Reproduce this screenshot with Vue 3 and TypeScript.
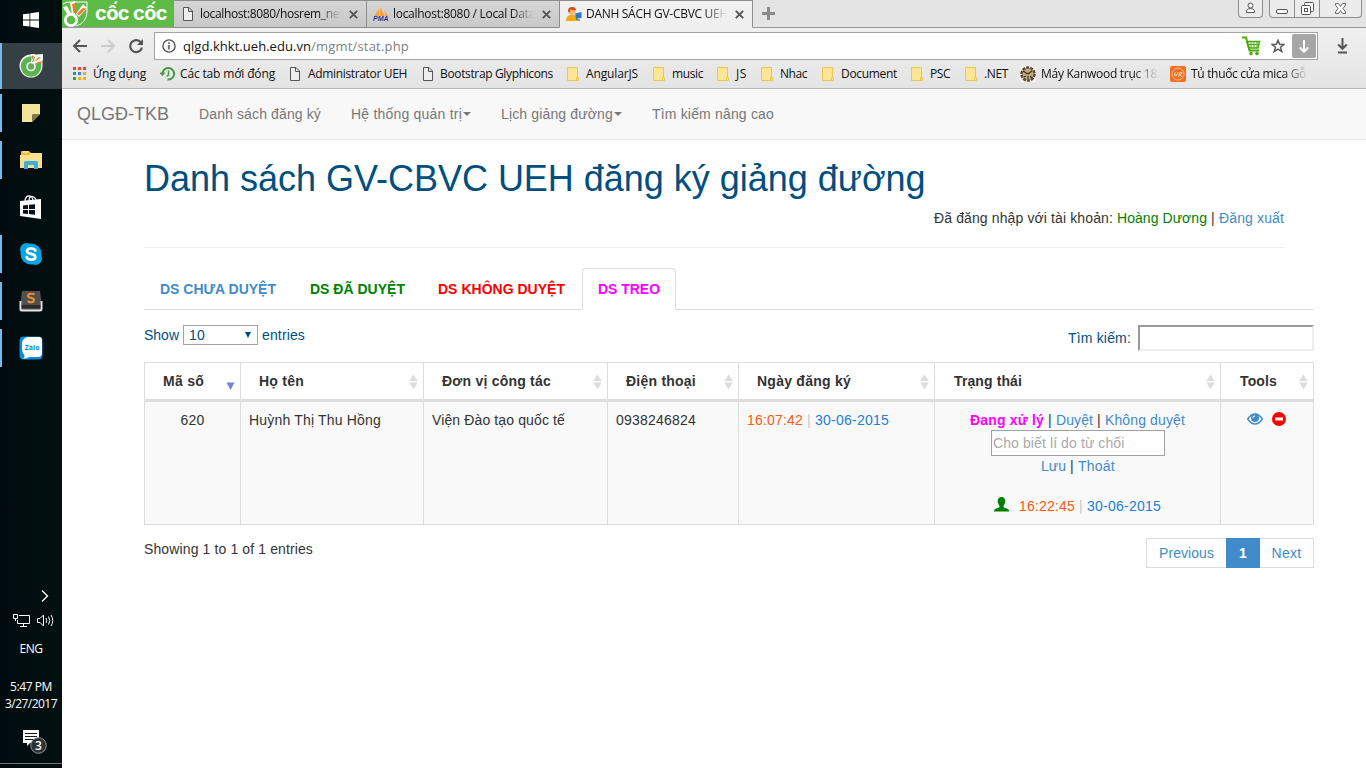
<script setup lang="ts">
import { ref } from 'vue'

interface Bookmark { label: string; icon: string; slot: number; textWidth: number; gap: number; fade?: boolean }
interface BrowserTab { title: string; icon: string; textWidth: number; active?: boolean }
interface Column { label: string; textWidth: number; sorted?: boolean }

// Spreads letters so that a label takes exactly the given width.
const vFit = {
  mounted(el: HTMLElement, binding: { value: number }) {
    const natural = el.getBoundingClientRect().width
    const count = (el.textContent || '').length
    if (count) el.style.letterSpacing = `${(binding.value - natural) / count}px`
  },
}

const search = ref('')
const reason = ref('')

const dock = ['win', 'coccoc', 'note', 'folder', 'store', 'skype', 'sublime', 'zalo']
const running = ['coccoc', 'note', 'folder', 'skype', 'sublime', 'zalo']

const browserTabs: BrowserTab[] = [
  { title: 'localhost:8080/hosrem_new', icon: 'page', textWidth: 148 },
  { title: 'localhost:8080 / Local Datab', icon: 'pma', textWidth: 149 },
  { title: 'DANH SÁCH GV-CBVC UEH', icon: 'user', textWidth: 142, active: true },
]

const bookmarks: Bookmark[] = [
  { label: 'Ứng dụng', icon: 'apps', slot: 88, textWidth: 53, gap: 5 },
  { label: 'Các tab mới đóng', icon: 'history', slot: 127, textWidth: 95, gap: 4 },
  { label: 'Administrator UEH', icon: 'page', slot: 133, textWidth: 99, gap: 5 },
  { label: 'Bootstrap Glyphicons', icon: 'page', slot: 146, textWidth: 113, gap: 4 },
  { label: 'AngularJS', icon: 'dir', slot: 86, textWidth: 52, gap: 4 },
  { label: 'music', icon: 'dir', slot: 64, textWidth: 31, gap: 4 },
  { label: 'JS', icon: 'dir', slot: 44, textWidth: 11, gap: 4 },
  { label: 'Nhac', icon: 'dir', slot: 61, textWidth: 27, gap: 4 },
  { label: 'Document', icon: 'dir', slot: 89, textWidth: 56, gap: 4 },
  { label: 'PSC', icon: 'dir', slot: 54, textWidth: 20, gap: 4 },
  { label: '.NET', icon: 'dir', slot: 56, textWidth: 24, gap: 4 },
  { label: 'Máy Kanwood trục 18', icon: 'clock', slot: 150, textWidth: 116, gap: 5, fade: true },
  { label: 'Tủ thuốc cửa mica Gỗ', icon: 'ur', slot: 150, textWidth: 115, gap: 5, fade: true },
]

const columns: Column[] = [
  { label: 'Mã số', textWidth: 41, sorted: true },
  { label: 'Họ tên', textWidth: 45 },
  { label: 'Đơn vị công tác', textWidth: 109 },
  { label: 'Điện thoại', textWidth: 70 },
  { label: 'Ngày đăng ký', textWidth: 94 },
  { label: 'Trạng thái', textWidth: 68 },
  { label: 'Tools', textWidth: 37 },
]
</script>

<template>
  <div class="screen">
    <aside class="dock">
      <div v-for="d in dock" :key="d" class="slot" :class="[d, { running: running.includes(d) }]">
        <svg v-if="d === 'win'" width="16" height="16" viewBox="0 0 16 16" fill="#fff"><path d="M0 2.3 6.5 1.4V7.5H0zM7.3 1.2 16 0V7.5H7.3zM0 8.4H6.5V14.6L0 13.7zM7.3 8.4H16V16L7.3 14.8z" /></svg>
        <svg v-else-if="d === 'coccoc'" width="24" height="24" viewBox="0 0 24 24">
          <path d="M12 .5A11.5 11.5 0 1 0 23.5 12L23.5 .5z" fill="#f4f8f2" />
          <circle cx="12" cy="12.5" r="10.2" fill="#5bb350" />
          <path d="M12 11V0H16zM13 11 17 1 24 0V6z" fill="#f5f7f2" />
          <path d="M12.500 7V2L15 1.500zM15 8.500 19 3.500 22 3zM16.500 10 22.500 7V9.500z" fill="#f26a21" />
          <circle cx="12" cy="12.500" r="4.800" fill="#f5f7f2" /><circle cx="12" cy="12.500" r="3.200" fill="#6fa666" />
        </svg>
        <svg v-else-if="d === 'note'" width="18" height="18" viewBox="0 0 18 18"><path d="M0 0H18V10.500H10.500V18H0z" fill="#f3e59a" /><path d="M10.500 10.500H18L10.500 18z" fill="#82794b" /></svg>
        <svg v-else-if="d === 'folder'" width="22" height="18" viewBox="0 0 22 18"><path d="M1 1Q1 0 2 0H9L11 2H20V6H1z" fill="#eebc3f" /><path d="M3 1H8" stroke="#fff" /><path d="M0 4H9L11 2H22V17H0z" fill="#fbdf8c" /><path d="M4 18V11.500Q4 10 5.500 10H16.500Q18 10 18 11.500V18H14V14H8V18z" fill="#38aee2" /></svg>
        <svg v-else-if="d === 'store'" width="22" height="24" viewBox="0 0 22 24"><path d="M5 7C5 2 7 1 9 1s4 2 4 5M9 6C9 2 11 1 12.500 1.500S16 3 16 6" fill="none" stroke="#fff" stroke-width="1.300" /><path d="M0 6 21 4V24L0 21z" fill="#fff" /><path d="M3 10.500 8 10V14H3zM9 9.800 15 9.200V14H9zM3 15H8V19L3 18.500zM9 15H15V19.800L9 19.100z" fill="#071014" /></svg>
        <svg v-else-if="d === 'skype'" width="24" height="24" viewBox="0 0 24 24"><circle cx="7.500" cy="7.500" r="6.500" fill="#08a5e3" /><circle cx="16.500" cy="16.500" r="6.500" fill="#08a5e3" /><circle cx="12" cy="12" r="10.500" fill="#08a5e3" /><path d="M16.300 8.500C15.500 5.800 8 5.600 8 9.200 8 13 16.300 10.800 16.300 15 16.300 18.600 8.300 18.600 7.700 15" fill="none" stroke="#fff" stroke-width="2.700" stroke-linecap="round" /></svg>
        <svg v-else-if="d === 'sublime'" width="24" height="22" viewBox="0 0 24 22"><path d="M3 1H21L23 17V19Q23 21 21 21H3Q1 21 1 19V17z" fill="#555" /><path d="M1.500 11V19Q1.500 20.500 3 20.500H21Q22.500 20.500 22.500 19V11" fill="none" stroke="#e4e4e4" stroke-width="2" /><path d="M4 1H20L21.500 15H2.500z" fill="#505050" /><path d="M2.500 15H21.500V18.500H2.500z" fill="#2c2c2c" /><path d="M15.500 4.500C13 3 9 3.500 9 6 9 8.500 15 7 15 10 15 12.500 11 13 8.700 11.300" fill="none" stroke="#f0913a" stroke-width="1.900" /></svg>
        <svg v-else width="24" height="24" viewBox="0 0 24 24"><rect x=".5" y=".5" width="23" height="23" rx="4" fill="#078bdb" /><path d="M8 1H20Q23 1 23 4V17Q23 21 19 21H10Q8 23 4 22.500 6 21 5.500 19 3 17 3 12V7Q3 3 8 1z" fill="#fff" /><text x="13.200" y="14" text-anchor="middle" class="zalo-text">Zalo</text></svg>
      </div>
      <div class="tray">
        <svg class="chev" width="8" height="12" viewBox="0 0 8 12"><path d="M1 .5 6.500 6 1 11.500" fill="none" stroke="#fff" stroke-width="1.300" /></svg>
        <div class="tray-icons">
          <svg width="17" height="15" viewBox="0 0 17 15" fill="none" stroke="#fff"><path d="M6 2.500H16.500V10.500H4.500V7M10.500 10.500V13.500M7 13.500H14" /><path d="M.5 1.500H4.500V5.500H.5zM2.500 5.500V8" /></svg>
          <svg width="18" height="15" viewBox="0 0 18 15" fill="none" stroke="#fff"><path d="M.5 5.500H3L6.500 2V13L3 9.500H.5zM9 5Q10.500 7.500 9 10M11.500 3.500Q14 7.500 11.500 11.500M14 2Q17.500 7.500 14 13" /></svg>
        </div>
        <div class="tray-text lang"><span v-fit="23">ENG</span></div>
        <div class="tray-text time"><span v-fit="42">5:47 PM</span></div>
        <div class="tray-text"><span v-fit="52">3/27/2017</span></div>
        <div class="notify">
          <svg width="26" height="27" viewBox="0 0 26 27"><path d="M1 1H17V14H8L5 17V14H1z" fill="#fff" /><path d="M3 4.500H15M3 7.500H15M3 10.500H12" stroke="#101a1e" /><circle cx="16.500" cy="16.500" r="7.800" fill="#2b3438" stroke="#8d9497" /></svg>
          <span class="count">3</span>
        </div>
      </div>
    </aside>

    <main class="browser">
      <header class="chrome">
        <div class="tabstrip">
          <div class="brand">
            <svg width="27" height="27" viewBox="0 0 27 27"><path d="M1 4Q3 2 9 2H25V11Q25 23 14 26" fill="none" stroke="#fff" stroke-width="1" /><path d="M1 7 5 6 10 15 6 16zM8 3 13 1 13 15 10 15zM14 14 21 4 25 8 17 17z" fill="#fff" /><path d="M10 4 13.500 3 13 13 11.500 13zM15 13.500 21 8 24 8.500 17 15.500z" fill="#f47a25" /><circle cx="9" cy="20" r="5.700" fill="#5dbb46" stroke="#fff" stroke-width="2.800" /></svg>
            <span v-fit="72" class="brand-text">cốc cốc</span>
          </div>
          <div v-for="t in browserTabs" :key="t.title" class="btab" :class="{ active: t.active }">
            <svg v-if="t.icon === 'page'" width="16" height="16" viewBox="0 0 16 16"><path d="M3.500 1.500H9L12.500 5V14.500H3.500zM8.500 1.500V5.500H12.500" fill="#eee" stroke="#555" /></svg>
            <svg v-else-if="t.icon === 'pma'" width="16" height="16" viewBox="0 0 16 16"><path d="M1 10 6 3V10zM7 10V1L12 10zM11 4 15 10H13z" fill="#f6a13c" /><text x="0" y="15" textLength="15.500" lengthAdjust="spacingAndGlyphs" class="pma-text">PMA</text></svg>
            <svg v-else width="16" height="16" viewBox="0 0 16 16"><path d="M0 15Q0 10 4 9H8Q11 10 11 15z" fill="#f3a712" /><circle cx="6" cy="5.500" r="3.500" fill="#f5b778" /><path d="M2 5Q2 1 6 1T10 4Q6 5 5 3L3 7z" fill="#d9481c" /><path d="M9 7.500 15.500 6V12L10 12.500z" fill="#2d7ac4" /><path d="M11 12V14H14" stroke="#356" fill="none" /></svg>
            <span class="btab-title"><span v-fit="t.textWidth">{{ t.title }}</span></span>
            <svg class="close" width="9" height="9" viewBox="0 0 9 9"><path d="M.8.8 8.200 8.200M8.200.8.8 8.200" stroke="#555" stroke-width="1.900" /></svg>
          </div>
          <svg class="plus" width="13" height="13" viewBox="0 0 13 13"><path d="M6.500 0V13M0 6.500H13" stroke="#8b8b8b" stroke-width="3" /></svg>
          <div class="winctl">
            <div class="wbox"><svg width="11" height="12" viewBox="0 0 11 12" fill="#fff" stroke="#555"><circle cx="5.500" cy="3.500" r="2.500" /><path d="M1.500 10.500V8.500Q3 6.500 5.500 6.500T9.500 8.500V10.500z" /></svg></div>
            <div class="wgroup">
              <div class="wb min"><svg width="12" height="5" viewBox="0 0 12 5"><rect x=".5" y=".5" width="11" height="4" rx="1.500" fill="#fff" stroke="#555" /></svg></div>
              <div class="wb max"><svg width="13" height="13" viewBox="0 0 13 13" fill="#fff" stroke="#555"><rect x="3.500" y=".5" width="9" height="9" rx="1" /><rect x=".5" y="3.500" width="9" height="9" rx="1" /><rect x="3.500" y="6.500" width="3" height="3" /></svg></div>
              <div class="wb end"><svg width="11" height="11" viewBox="0 0 11 11"><path d="M.5.5H3.500L5.500 3.500 7.500.5H10.500V2L8 5.500 10.500 9V10.500H7.500L5.500 7.500 3.500 10.500H.5V9L3 5.500.5 2z" fill="#fff" stroke="#666" /></svg></div>
            </div>
          </div>
        </div>
        <div class="toolbar">
          <svg class="nav-ico" width="16" height="14" viewBox="0 0 16 14" fill="none" stroke="#555" stroke-width="2"><path d="M15 7H2.500M8 1 2 7 8 13" /></svg>
          <svg class="nav-ico" width="16" height="14" viewBox="0 0 16 14" fill="none" stroke="#ccc" stroke-width="2"><path d="M1 7H13.500M8 1 14 7 8 13" /></svg>
          <svg class="nav-ico" width="16" height="16" viewBox="0 0 16 16" fill="none"><path d="M13 4.500A6 6 0 1 0 14 9.500" stroke="#555" stroke-width="2.200" /><path d="M15 1V7H9z" fill="#555" /></svg>
          <div class="urlbox">
            <svg width="14" height="14" viewBox="0 0 14 14"><circle cx="7" cy="7" r="6.100" fill="none" stroke="#555" stroke-width="1.400" /><path d="M7 6V10.500M7 3.300V5" stroke="#555" stroke-width="1.600" /></svg>
            <span class="url"><span v-fit="128">qlgd.khkt.ueh.edu.vn</span><span v-fit="98" class="path">/mgmt/stat.php</span></span>
            <svg class="cart" width="19" height="20" viewBox="0 0 19 20" fill="none" stroke="#4bab0b"><path d="M0 1.500H4L7.500 14.500H17" stroke-width="2" /><path d="M5 5.500H17.500L16 12H7z" stroke-width="1.500" /><path d="M6 8.500H17M9 5V12M12 5V12M15 5V12" /><circle cx="9" cy="17.500" r="1.400" fill="#4bab0b" /><circle cx="15" cy="17.500" r="1.400" fill="#4bab0b" /></svg>
            <svg class="star" width="14" height="14" viewBox="0 0 14 14"><path d="M7 1.200 8.600 5.300 13 5.500 9.500 8.200 10.800 12.600 7 10.100 3.200 12.600 4.500 8.200 1 5.500 5.400 5.300z" fill="none" stroke="#555" stroke-width="1.400" /></svg>
            <div class="dlbox"><svg width="10" height="13" viewBox="0 0 10 13" fill="none" stroke="#fff" stroke-width="2"><path d="M5 0V11.500M.8 7.500 5 11.800 9.200 7.500" /></svg></div>
          </div>
          <svg class="dl" width="11" height="16" viewBox="0 0 11 16" fill="none" stroke="#555" stroke-width="2"><path d="M5.500 0V10M1.200 6.500 5.500 10.800 9.800 6.500M1 14.500H10" /></svg>
        </div>
        <div class="bookmarks">
          <div v-for="b in bookmarks" :key="b.label" class="bm" :style="{ width: b.slot + 'px', gap: b.gap + 'px' }">
            <svg v-if="b.icon === 'apps'" width="16" height="16" viewBox="0 0 16 16"><path d="M1 1H4V4H1zM6 1H9V4H6zM11 1H14V4H11z" fill="#e8493b" /><path d="M1 6H4V9H1z" fill="#2c9e57" /><path d="M6 6H9V9H6z" fill="#3c83ee" /><path d="M11 6H14V9H11zM6 11H9V14H6zM11 11H14V14H11z" fill="#f2ae15" /><path d="M1 11H4V14H1z" fill="#2c9e57" /></svg>
            <svg v-else-if="b.icon === 'history'" width="16" height="16" viewBox="0 0 16 16" fill="none" stroke="#449c43"><path d="M2.500 8A5.800 5.800 0 1 1 7.500 13.500" stroke-width="2" /><path d="M-1 6.500H5.500L2.500 10z" fill="#449c43" stroke="none" /><path d="M8.500 4.500V9L6.500 10.500" stroke-width="1.500" /></svg>
            <svg v-else-if="b.icon === 'page'" width="16" height="16" viewBox="0 0 16 16"><path d="M3.500 1.500H9L12.500 5V14.500H3.500zM8.500 1.500V5.500H12.500" fill="#eee" stroke="#555" /></svg>
            <svg v-else-if="b.icon === 'dir'" width="16" height="16" viewBox="0 0 16 16"><path d="M1.500 1.500H11.500V11L12.500 12V14.500H1.500z" fill="#fee594" stroke="#ebc54c" /><path d="M10.500 14V11.500H12.500" fill="none" stroke="#ebc54c" /></svg>
            <svg v-else-if="b.icon === 'clock'" width="16" height="16" viewBox="0 0 16 16"><rect width="16" height="16" fill="#f4f1eb" /><circle cx="8" cy="8" r="6.500" fill="#c1aa82" stroke="#5b4a38" stroke-width="2.500" stroke-dasharray="3 1" /><path d="M3 5 8 8 12 5M8 10V13M4 11 6 10M10 10 12 12" stroke="#3c3026" fill="none" stroke-width="1.200" /></svg>
            <svg v-else width="16" height="16" viewBox="0 0 16 16"><rect width="16" height="16" rx="2" fill="#f36f21" /><circle cx="8" cy="8" r="6" fill="none" stroke="#ffb78f" /><path d="M5.500 6 4.500 9Q5 11 7 9L8 6M8.500 11 10 6Q13 6 11.500 8H9.500L12 11" fill="none" stroke="#ffe1d0" /></svg>
            <span v-fit="b.textWidth" :class="{ fade: b.fade }">{{ b.label }}</span>
          </div>
        </div>
      </header>

      <nav class="navbar">
        <span class="logo"><span v-fit="92">QLGĐ-TKB</span></span>
        <span class="item"><span v-fit="122">Danh sách đăng ký</span></span>
        <span class="item"><span v-fit="111">Hệ thống quản trị</span><i class="caret"></i></span>
        <span class="item"><span v-fit="112">Lịch giảng đường</span><i class="caret"></i></span>
        <span class="item"><span v-fit="122">Tìm kiếm nâng cao</span></span>
      </nav>

      <section class="page">
        <h1><span v-fit="781.5">Danh sách GV-CBVC UEH đăng ký giảng đường</span></h1>
        <div class="account">
          <span v-fit="183" class="pre">Đã đăng nhập với tài khoản: </span><span v-fit="90" class="green">Hoàng Dương</span><span v-fit="12" class="pre"> | </span><a v-fit="65">Đăng xuất</a>
        </div>
        <hr />
        <div class="tabs">
          <div class="tab blue"><b v-fit="116">DS CHƯA DUYỆT</b></div>
          <div class="tab green"><b v-fit="95">DS ĐÃ DUYỆT</b></div>
          <div class="tab red"><b v-fit="127">DS KHÔNG DUYỆT</b></div>
          <div class="tab pink on"><b v-fit="62">DS TREO</b></div>
        </div>
        <div class="controls">
          <div class="length"><span v-fit="35">Show</span><div class="select"><span v-fit="16">10</span><i></i></div><span v-fit="43">entries</span></div>
          <label class="search"><span v-fit="63">Tìm kiếm:</span><input v-model="search" type="text" /></label>
        </div>
        <div class="table">
          <div v-for="c in columns" :key="c.label" class="th">
            <b v-fit="c.textWidth">{{ c.label }}</b>
            <svg v-if="c.sorted" width="9" height="16" viewBox="0 0 9 16"><path d="M.5 8.500H8.500L4.500 16z" fill="#7a7fdf" /></svg>
            <svg v-else width="9" height="16" viewBox="0 0 9 16"><path d="M.3 7 4.500 .5 8.700 7zM.3 8.500H8.700L4.500 15.500z" fill="#dcdcdc" /></svg>
          </div>
          <div class="td mid"><span v-fit="24">620</span></div>
          <div class="td"><span v-fit="132">Huỳnh Thị Thu Hồng</span></div>
          <div class="td"><span v-fit="133">Viện Đào tạo quốc tế</span></div>
          <div class="td"><span v-fit="80">0938246824</span></div>
          <div class="td"><span v-fit="56" class="orange">16:07:42</span><span v-fit="12" class="pre pale"> | </span><span v-fit="74" class="azure">30-06-2015</span></div>
          <div class="td mid status">
            <div><b v-fit="74" class="pink">Đang xử lý</b><span v-fit="12" class="pre"> | </span><a v-fit="37">Duyệt</a><span v-fit="12" class="pre"> | </span><a v-fit="80">Không duyệt</a></div>
            <input v-model="reason" class="reason" type="text" placeholder="Cho biết lí do từ chối" />
            <div class="links"><a v-fit="25">Lưu</a><span v-fit="12" class="pre"> | </span><a v-fit="37">Thoát</a></div>
            <div class="stamp">
              <svg width="15" height="15" viewBox="0 0 15 15"><path d="M7.500 0C10 0 11.300 1.800 11.300 4.200 11.300 6.500 10 7.800 9.500 9 9.500 10.500 10.300 10.700 12 11.300 14 12 15 12.500 15 14.500H0C0 12.500 1 12 3 11.300 4.700 10.700 5.500 10.500 5.500 9 5 7.800 3.700 6.500 3.700 4.200 3.700 1.800 5 0 7.500 0z" fill="#008000" /></svg>
              <span v-fit="56" class="orange">16:22:45</span><span v-fit="12" class="pre pale"> | </span><span v-fit="74" class="azure">30-06-2015</span>
            </div>
          </div>
          <div class="td tools">
            <svg width="16" height="14" viewBox="0 0 16 14"><path d="M.7 7Q4 2 8 2T15.300 7Q12 12 8 12T.7 7z" fill="#fff" stroke="#428bca" stroke-width="1.400" /><circle cx="8" cy="6" r="4" fill="#428bca" /><path d="M6 5.800Q6 4 8 3.800" fill="none" stroke="#fff" stroke-width="1.100" /></svg>
            <svg width="14" height="14" viewBox="0 0 14 14"><circle cx="7" cy="7" r="7" fill="#f00" /><path d="M3 5.500H11V8.500H3z" fill="#fff" /></svg>
          </div>
        </div>
        <footer class="foot">
          <span v-fit="169" class="info">Showing 1 to 1 of 1 entries</span>
          <div class="pager"><a class="prev"><span v-fit="55">Previous</span></a><a class="cur"><b>1</b></a><a class="next"><span v-fit="30">Next</span></a></div>
        </footer>
      </section>
    </main>
  </div>
</template>

<style>
body { margin: 0; overflow: hidden; }
</style>

<style scoped>
* { box-sizing: border-box; }
svg { display: block; flex: none; }
span, b, a { white-space: nowrap; }
.screen { display: flex; width: 1366px; height: 768px; overflow: hidden; background: #fff; font: 14px/20px "Liberation Sans", Arial, sans-serif; color: #333; }
.dock { width: 62px; height: 768px; flex: none; background: linear-gradient(90deg, #010b0f, #02100f); display: flex; flex-direction: column; border-bottom: 1px solid #01090c; }
.slot { height: 47px; display: flex; align-items: center; justify-content: center; padding-bottom: 1px; background: linear-gradient(#76b9ed, #76b9ed) no-repeat 0 4px / 0 38px; }
.slot.running { background-size: 2px 38px; }
.slot.win { height: 43px; padding-bottom: 3px; }
.slot.coccoc { background-size: 2px 46px; background-position: 0 0; background-color: #344044; height: 46px; margin-bottom: 1px; padding-bottom: 0; }
.slot.sublime, .slot.zalo, .slot.store { padding-bottom: 2px; }
.zalo-text { font: bold 7px "Open Sans", sans-serif; fill: #078bdb; }
.pma-text { font: italic bold 6.5px "Liberation Sans", sans-serif; fill: #34348c; }
.tray { margin-top: auto; height: 178px; display: flex; flex-direction: column; color: #fff; font: 12px/17px "Open Sans", sans-serif; border-bottom: 1px solid #6f7678; margin-bottom: 3px; }
.chev { margin-left: 41px; margin-top: 4px; }
.tray-icons { display: flex; gap: 7px; margin: 11px 0 0 13px; height: 15px; }
.tray-text { text-align: center; height: 17px; }
.tray-text span { display: inline-block; }
.lang { margin-top: 12px; }
.time { margin-top: 21px; }
.notify { position: relative; margin: 17px 0 0 22px; }
.count { position: absolute; left: 12.5px; top: 8px; width: 8px; font-weight: 600; text-align: center; }
.browser { flex: 1; min-width: 0; }
.chrome { height: 89px; border-bottom: 1px solid #b8b8b8; background: linear-gradient(#f0f0f0 28px, #e4e4e4 88px); font: 12px/16px "Open Sans", sans-serif; color: #111; }
.tabstrip { height: 28px; display: flex; background: linear-gradient(#e4e4e4 27px, #999 27px); }
.brand { width: 111px; height: 28px; background: #5dbb46; display: flex; align-items: center; border-bottom: 1px solid #999; overflow: hidden; }
.brand-text { margin-left: 6px; color: #fff; font: 700 20px/27px Inter, sans-serif; }
.btab { width: 193px; height: 28px; display: flex; align-items: center; padding-left: 6px; border: 1px solid #8d8d8d; border-width: 1px 0 1px 1px; background: linear-gradient(#d5d5d5, #c9c9c9); }
.btab.active { background: #f0f0f0; width: 194px; border-bottom-color: #f0f0f0; border-right-width: 1px; }
.btab-title { width: 142px; margin-left: 4px; overflow: hidden; mask-image: linear-gradient(90deg, #000 118px, transparent 141px); }
.btab-title span { display: inline-block; }
.close { margin-left: 7px; }
.plus { margin: 7px 0 0 9px; }
.winctl { margin: 0 4px 0 auto; display: flex; gap: 6px; }
.wbox, .wgroup { height: 18px; border: 1px solid #8e8e8e; border-top: 0; border-radius: 0 0 4px 4px; background: #ececec; }
.wbox { width: 25px; display: flex; justify-content: center; padding-top: 2px; }
.wgroup { width: 93px; display: flex; }
.wb { display: flex; justify-content: center; border-right: 1px solid #8e8e8e; }
.min { width: 25px; padding-top: 9px; }
.max { width: 25px; padding-top: 2px; }
.end { flex: 1; padding-top: 3px; border-right: 0; }
.toolbar { height: 32px; display: flex; align-items: center; padding: 4px 0 0 10px; }
.nav-ico { margin-right: 12px; }
.urlbox { width: 1164px; margin-left: -2px; margin-right: 19px; height: 28px; border: 1px solid #a3a3a3; background: #fff; display: flex; align-items: center; padding: 0 1px 0 7px; }
.url { margin-left: 7px; font-size: 13px; }
.url span { display: inline-block; }
.url .path { color: #808080; }
.cart { margin-left: auto; }
.star { margin: 0 7px 0 10px; }
.dlbox { width: 24px; height: 24px; background: #a6a6a6; border-radius: 2px; display: grid; place-items: center; }
.bookmarks { height: 28px; display: flex; align-items: center; padding-left: 10px; }
.bm { display: flex; align-items: center; flex: none; }
.fade { mask-image: linear-gradient(90deg, #000 92px, transparent 118px); }
.navbar { height: 51px; background: #f8f8f8; border-bottom: 1px solid #e7e7e7; display: flex; align-items: center; padding-left: 15px; gap: 30px; color: #777; }
.logo { font-size: 18px; }
.logo span, .item span { display: inline-block; }
.item { display: flex; align-items: center; }
.caret { margin-left: 1px; border: 4px solid transparent; border-top-color: #777; border-bottom: 0; }
.page { margin-left: 82px; width: 1170px; }
h1 { margin: 19px 0 0; font-size: 36px; line-height: 40px; font-weight: 400; color: #004f7f; height: 40px; }
h1 span { display: inline-block; }
.account { width: 1140px; margin-top: 9px; display: flex; justify-content: flex-end; }
.pre { white-space: pre; }
a, .blue { color: #428bca; }
.green { color: #008000; }
.red { color: #f00; }
.pink { color: #f0f; }
.orange { color: #ff5a0f; }
.azure { color: #2080dc; }
.pale { color: #c8c8c8; }
hr { width: 1140px; height: 1px; margin: 19px 0 20px; background: #eee; border: 0; }
.tabs { display: flex; gap: 2px; height: 42px; border-bottom: 1px solid #ddd; }
.tab { padding: 11px 16px 0; height: 42px; }
.tab.red { padding-left: 15px; }
.tab.on { border: 1px solid #ddd; border-bottom-color: #fff; border-radius: 4px 4px 0 0; padding: 10px 15px 0; width: 94px; margin-left: -1px; background: #fff; }
.tab b { display: inline-block; }
.controls { height: 52px; display: flex; justify-content: space-between; padding-top: 15px; color: #004f7f; }
.length { display: flex; align-items: center; height: 20px; gap: 4px; }
.select { width: 75px; height: 20px; border: 1px solid #a5a5a5; padding: 0 6px 0 5px; display: flex; align-items: center; justify-content: space-between; }
.select i { border: 3.5px solid transparent; border-top: 6px solid #004f7f; border-bottom: 0; }
.search { display: flex; align-items: center; height: 26px; gap: 7px; }
.search input { width: 176px; height: 26px; border: 2px solid; border-color: #999 #eee #eee #999; padding: 1px; outline: 0; }
.table { display: grid; grid-template-columns: 96px 183px 184px 131px 196px 286px 93px; border-right: 1px solid #ddd; width: 1170px; }
.th { height: 40px; border-left: 1px solid #ddd; border-top: 1px solid #ddd; border-bottom: 3px solid #ddd; padding: 0 5px 0 18px; display: flex; justify-content: space-between; align-items: center; }
.th b { margin-top: -1px; }
.th svg { margin-top: 1px; }
.th:nth-child(6), .th:nth-child(7) { padding-left: 19px; }
.td { height: 123px; border-left: 1px solid #ddd; border-bottom: 1px solid #ddd; background: #f9f9f9; padding: 8px; display: flex; align-items: flex-start; }
.mid { justify-content: center; }
.status { flex-direction: column; align-items: center; justify-content: flex-start; }
.status > div { display: flex; height: 20px; }
.reason { width: 174px; height: 26px; border: 1px solid #a0a0a0; background: #fff; padding: 0 1px; font: 14px "Liberation Sans", Arial, sans-serif; letter-spacing: .1px; outline: 0; margin: 0 0 0 1px; }
.reason::placeholder { color: #a9a9a9; }
.status .links { padding-left: 1px; }
.status .stamp { margin-top: 20px; }
.stamp svg { margin: 1px 10px 0 0; }
.tools { justify-content: center; gap: 9px; padding: 10px 9px 0 8px; }
.foot { display: flex; justify-content: space-between; padding-top: 13px; }
.info { margin-top: 1px; height: 20px; }
.pager { display: flex; height: 30px; line-height: 28px; }
.pager a { border: 1px solid #ddd; text-align: center; }
.pager span { display: inline-block; }
.prev { width: 81px; }
.pager .cur { width: 34px; background: #428bca; border-color: #428bca; color: #fff; margin-left: -1px; }
.pager .next { width: 54px; border-left: 0; }
</style>
